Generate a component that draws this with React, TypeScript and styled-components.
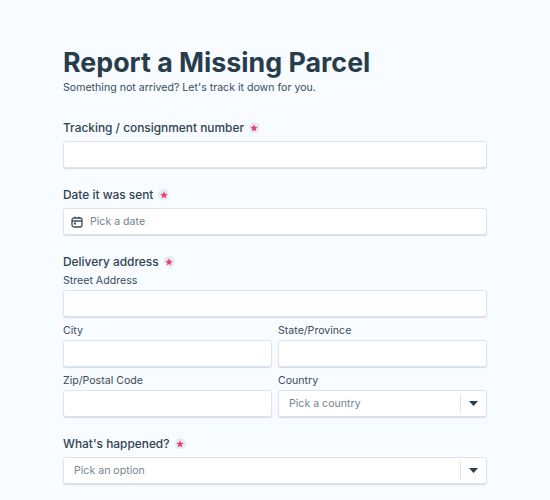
import React from "react";
import styled, { createGlobalStyle } from "styled-components";

const Global = createGlobalStyle`
  html, body { margin: 0; padding: 0; background: #f8fbff; }
  body { font-family: Inter, "Liberation Sans", sans-serif; color: #283d4b; -webkit-font-smoothing: antialiased; }
`;

const Page = styled.main`
  box-sizing: border-box;
  width: 550px;
  height: 500px;
  overflow: hidden;
  padding: 45px 63px 0 63px;
  background: #f8fbff;
`;

const Title = styled.h1`
  margin: 0;
  font-size: 26.8px;
  line-height: 34px;
  font-weight: 700;
  color: #283d4b;
`;

const Subtitle = styled.p`
  margin: 0 0 22px;
  font-size: 10.6px;
  line-height: 17px;
  color: #3a4d5a;
`;

const Field = styled.section`
  margin-bottom: 17px;
`;

const Label = styled.div<{ $tight?: boolean }>`
  display: flex;
  align-items: center;
  gap: 5px;
  font-size: 11.9px;
  font-weight: 500;
  line-height: 19px;
  margin-bottom: ${(p) => (p.$tight ? 3 : 4)}px;
  color: #2f4350;
`;

const Star = styled.span`
  display: inline-flex;
  align-items: center;
  justify-content: center;
  width: 11px;
  height: 11px;
  border-radius: 50%;
  background: #e6ebf2;
`;

const SubLabel = styled.div`
  font-size: 10.6px;
  line-height: 14px;
  margin-bottom: 2px;
  color: #3a4d5a;
`;

const Box = styled.div`
  box-sizing: border-box;
  height: 27px;
  display: flex;
  align-items: center;
  background: #fff;
  border: 1px solid #dde4ee;
  border-radius: 3px;
  box-shadow: 0 1px 1px #d3dbe8;
`;

const Grid = styled.div`
  display: grid;
  grid-template-columns: 209px 209px;
  column-gap: 6px;
  row-gap: 7px;
`;

const Stack = styled.div`
  margin-bottom: 7px;
`;

const Placeholder = styled.span<{ $pad: number }>`
  flex: 1;
  font-size: 10.6px;
  color: #75838f;
  padding-left: ${(p) => p.$pad}px;
`;

const Sep = styled.span`
  width: 1px;
  height: 19px;
  background: #dde4ee;
`;

const Arrow = styled.span`
  width: 25px;
  display: flex;
  justify-content: center;
`;

const StarIcon = () => (
  <Star>
    <svg width="8" height="8" viewBox="0 0 24 24" fill="#ec3f78">
      <path d="M12 1l3.2 7.2 7.8.8-5.9 5.2 1.8 7.8L12 18l-6.9 4 1.8-7.8L1 9l7.8-.8z" />
    </svg>
  </Star>
);

const Cal = styled.svg`
  margin-left: 7px;
  margin-right: 7px;
  flex: none;
`;

const Select = ({ text }: { text: string }) => (
  <Box>
    <Placeholder $pad={10}>{text}</Placeholder>
    <Sep />
    <Arrow>
      <svg width="9" height="5" viewBox="0 0 9 5"><path d="M0 0h9L4.5 5z" fill="#283d4b" /></svg>
    </Arrow>
  </Box>
);

export default function App() {
  return (
    <Page>
      <Global />
      <Title>Report a Missing Parcel</Title>
      <Subtitle>Something not arrived? Let's track it down for you.</Subtitle>

      <Field>
        <Label>Tracking / consignment number <StarIcon /></Label>
        <Box />
      </Field>

      <Field>
        <Label>Date it was sent <StarIcon /></Label>
        <Box>
          <Cal width="12" height="12" viewBox="0 0 12 12" fill="none" stroke="#3a4d5a" strokeWidth="1.3">
            <rect x="1" y="2" width="10" height="9" rx="2" />
            <path d="M1 5h10M4 .8v2M8 .8v2" />
            <rect x="3" y="6.5" width="2" height="2" fill="#3a4d5a" stroke="none" />
          </Cal>
          <Placeholder $pad={0}>Pick a date</Placeholder>
        </Box>
      </Field>

      <Field>
        <Label $tight>Delivery address <StarIcon /></Label>
        <Stack>
          <SubLabel>Street Address</SubLabel>
          <Box />
        </Stack>
        <Grid>
          <div><SubLabel>City</SubLabel><Box /></div>
          <div><SubLabel>State/Province</SubLabel><Box /></div>
          <div><SubLabel>Zip/Postal Code</SubLabel><Box /></div>
          <div><SubLabel>Country</SubLabel><Select text="Pick a country" /></div>
        </Grid>
      </Field>

      <Field>
        <Label>What's happened? <StarIcon /></Label>
        <Select text="Pick an option" />
      </Field>
    </Page>
  );
}
